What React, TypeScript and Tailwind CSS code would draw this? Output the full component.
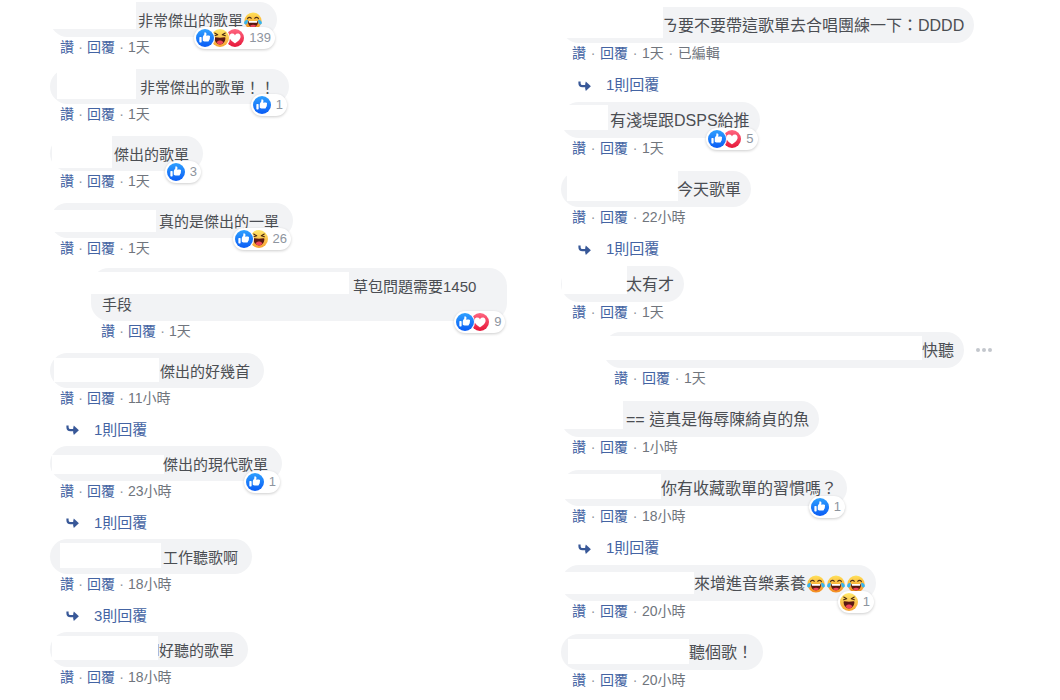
import { useId } from 'react';
import clsx from 'clsx';

type Reaction = 'like' | 'haha' | 'love';

// Cover over the commenter's name, in bubble coordinates
interface Cover {
  x1: number;
  y1: number;
  x2: number;
  y2: number;
}

interface Comment {
  id: string;
  text: string;
  nameWidth: number;
  cover: Cover;
  time: string;
  joy?: number;
  edited?: boolean;
  nested?: boolean;
  multiline?: boolean;
  menu?: boolean;
  nameEdge?: boolean;
  replies?: number;
  reactions?: { types: Reaction[]; count: number };
}

const LEFT: Comment[] = [
  { id: 'l1', text: '非常傑出的歌單', joy: 1, nameWidth: 77, cover: { x1: -2, y1: -2, x2: 86, y2: 27 }, time: '1天', reactions: { types: ['like', 'haha', 'love'], count: 139 } },
  { id: 'l2', text: '非常傑出的歌單！！', nameWidth: 79, cover: { x1: 7, y1: -1, x2: 86, y2: 30 }, time: '1天', reactions: { types: ['like'], count: 1 } },
  { id: 'l3', text: '傑出的歌單', nameWidth: 53, cover: { x1: 2, y1: -1, x2: 62, y2: 32 }, time: '1天', reactions: { types: ['like'], count: 3 } },
  { id: 'l4', text: '真的是傑出的一單', nameWidth: 98, cover: { x1: -1, y1: 7, x2: 106, y2: 29 }, time: '1天', reactions: { types: ['like', 'haha'], count: 26 } },
  { id: 'l5', text: '草包問題需要1450\n手段', nested: true, multiline: true, nameWidth: 251, cover: { x1: -1, y1: 4, x2: 258, y2: 26 }, time: '1天', reactions: { types: ['like', 'love'], count: 9 } },
  { id: 'l6', text: '傑出的好幾首', nameWidth: 99, cover: { x1: 4, y1: 5, x2: 109, y2: 29 }, time: '11小時', replies: 1 },
  { id: 'l7', text: '傑出的現代歌單', nameWidth: 102, cover: { x1: 2, y1: 9, x2: 114, y2: 28 }, time: '23小時', replies: 1, reactions: { types: ['like'], count: 1 } },
  { id: 'l8', text: '工作聽歌啊', nameWidth: 102, cover: { x1: 10, y1: 4, x2: 111, y2: 29 }, time: '18小時', replies: 3 },
  { id: 'l9', text: '好聽的歌單', nameEdge: true, nameWidth: 98, cover: { x1: 2, y1: 4, x2: 108, y2: 28 }, time: '18小時' },
];

const RIGHT: Comment[] = [
  { id: 'r1', text: 'ㄋ要不要帶這歌單去合唱團練一下：DDDD', nameWidth: 90, cover: { x1: -1, y1: -2, x2: 102, y2: 31 }, time: '1天', edited: true, replies: 1 },
  { id: 'r2', text: '有淺堤跟DSPS給推', nameWidth: 38, cover: { x1: -1, y1: 3, x2: 47, y2: 28 }, time: '1天', reactions: { types: ['like', 'love'], count: 5 } },
  { id: 'r3', text: '今天歌單', nameWidth: 105, cover: { x1: 6, y1: -1, x2: 117, y2: 30 }, time: '22小時', replies: 1 },
  { id: 'r4', text: '太有才', nameWidth: 54, cover: { x1: 1, y1: -1, x2: 66, y2: 28 }, time: '1天' },
  { id: 'r5', text: '快聽', nested: true, menu: true, nameWidth: 308, cover: { x1: -1, y1: 4, x2: 319, y2: 28 }, time: '1天' },
  { id: 'r6', text: '== 這真是侮辱陳綺貞的魚', nameWidth: 54, cover: { x1: -1, y1: -1, x2: 62, y2: 28 }, time: '1小時' },
  { id: 'r7', text: '你有收藏歌單的習慣嗎？', nameWidth: 89, cover: { x1: -1, y1: 4, x2: 100, y2: 29 }, time: '18小時', replies: 1, reactions: { types: ['like'], count: 1 } },
  { id: 'r8', text: '來增進音樂素養', joy: 3, nameWidth: 122, cover: { x1: -1, y1: 7, x2: 133, y2: 29 }, time: '20小時', reactions: { types: ['haha'], count: 1 } },
  { id: 'r9', text: '聽個歌！', nameWidth: 117, cover: { x1: 7, y1: 5, x2: 128, y2: 30 }, time: '20小時' },
];

function ReactionIcon({ type }: { type: Reaction }) {
  const id = useId();
  const stops = {
    like: ['#2ea0ff', '#0a5cf5'],
    haha: ['#ffe96b', '#f7a232'],
    love: ['#ff6680', '#e61739'],
  }[type];

  return (
    <svg viewBox="0 0 16 16" className="h-[18px] w-[18px]" aria-label={type}>
      <defs>
        <linearGradient id={id} x1="0" y1="0" x2="0" y2="1">
          <stop offset="0" stopColor={stops[0]} />
          <stop offset="1" stopColor={stops[1]} />
        </linearGradient>
      </defs>
      <circle cx="8" cy="8" r="8" fill={`url(#${id})`} />
      {type === 'like' && (
        <path
          fill="#fff"
          d="M12.162 7.338c.176.123.338.245.338.674 0 .43-.229.604-.474.725.1.163.132.36.089.546-.077.344-.392.611-.672.69.121.194.159.385.015.62-.185.295-.346.407-1.058.407H7.5c-.988 0-1.5-.546-1.5-1V7.665c0-1.23 1.467-2.275 1.467-3.13L7.361 3.47c-.005-.065.008-.224.058-.27.08-.079.301-.2.635-.2.218 0 .363.041.534.123.581.277.732.978.732 1.542 0 .271-.414 1.083-.47 1.364 0 0 .867-.192 1.879-.199 1.061-.006 1.749.19 1.749.842 0 .261-.219.523-.316.666zM3.6 7h.8a.6.6 0 01.6.6v3.8a.6.6 0 01-.6.6h-.8a.6.6 0 01-.6-.6V7.6a.6.6 0 01.6-.6z"
        />
      )}
      {type === 'love' && (
        <path
          fill="#fff"
          d="M10.473 4C8.275 4 8 5.824 8 5.824S7.726 4 5.528 4c-2.114 0-2.73 2.222-2.472 3.41C3.736 10.55 8 12.75 8 12.75s4.265-2.2 4.945-5.34c.257-1.188-.36-3.41-2.472-3.41"
        />
      )}
      {type === 'haha' && (
        <>
          <path d="M3.3 3.6 6 5.1 3.2 6M12.7 3.6 10 5.1l2.8.9" fill="none" stroke="#4a2a12" strokeWidth="0.9" strokeLinecap="round" strokeLinejoin="round" />
          <path d="M3.2 8c0-.5.4-.7.9-.6 2.500.4 5.300.4 7.800 0 .5-.1.9.1.9.6 0 3.200-1.900 5.700-4.800 5.700S3.200 11.200 3.200 8Z" fill="#5a1a14" />
          <path d="M4.900 11.900c.8-1.200 1.900-1.700 3.100-1.700s2.300.5 3.100 1.700c-.8 1.100-1.800 1.800-3.100 1.800s-2.300-.7-3.100-1.800Z" fill="#f0455a" />
        </>
      )}
    </svg>
  );
}

function JoyEmoji() {
  const id = useId();
  return (
    <svg viewBox="0 0 18 18" className="mx-px -my-1 inline-block h-[18px] w-[18px] align-baseline" role="img" aria-label="joy">
      <defs>
        <linearGradient id={id} x1="0" y1="0" x2="0" y2="1">
          <stop offset="0" stopColor="#ffe25a" />
          <stop offset="1" stopColor="#f58a1f" />
        </linearGradient>
      </defs>
      <circle cx="9" cy="9" r="8.600" fill={`url(#${id})`} />
      <path d="M3.600 6.600c.5-1.600 2.700-1.800 3.600-.3M10.800 6.300c.9-1.500 3.100-1.300 3.600.3" fill="none" stroke="#4f321c" strokeWidth="1.200" strokeLinecap="round" />
      <path d="M4 9h10c.4 3.500-1.900 6.300-5 6.300S3.600 12.500 4 9Z" fill="#57180f" />
      <path d="M4.600 9h8.800l-.4 1.700H5Z" fill="#fff" />
      <path d="M6 13.700c1.600-1.400 4.400-1.400 6 0-1.600 2.100-4.400 2.100-6 0Z" fill="#f0455a" />
      <path d="M3.800 7.800C1.700 8 .1 9.200.1 10.800c0 1.200.9 1.900 1.800 1.700 1.600-.3 2.100-2.500 1.900-4.700ZM14.200 7.800c2.100.2 3.700 1.400 3.700 3 0 1.200-.9 1.900-1.800 1.700-1.600-.3-2.100-2.500-1.900-4.700Z" fill="#35b4ee" />
    </svg>
  );
}

function ReactionPill({ types, count }: { types: Reaction[]; count: number }) {
  return (
    <button className="absolute right-[2px] -bottom-3 flex h-[22px] items-center rounded-full bg-white pr-1 pl-[2px] shadow-[0_1px_3px_rgba(0,0,0,0.2)]">
      <span className="flex flex-row-reverse">
        {[...types].reverse().map((type, i) => (
          <span
            key={type}
            className={clsx('relative rounded-full bg-white ring-1 ring-white', i < types.length - 1 && '-ml-[3px]')}
          >
            <ReactionIcon type={type} />
          </span>
        ))}
      </span>
      <span className="ml-[5px] text-[13px] leading-4 text-[#8d949e]">{count}</span>
    </button>
  );
}

function Dot({ large }: { large: boolean }) {
  return <span className={clsx('text-center text-[#90949c]', large ? 'w-[14px]' : 'w-[13px]')}>·</span>;
}

function CommentItem({ comment, large }: { comment: Comment; large: boolean }) {
  const { cover } = comment;
  return (
    <li
      className={clsx(
        comment.nested && (large ? '-mt-[3px] ml-[42px]' : '-mt-[2px] ml-[41px]'),
        !comment.replies && (large ? 'mb-[13px]' : 'mb-3'),
      )}
    >
      <div className="flex items-center">
        <div
          className={clsx(
            'relative rounded-[18px] bg-[#f2f3f5] pl-[11px] leading-[18px] text-[#4b4e53]',
            large ? 'pt-[10px] pr-[10px] pb-2 text-[16px]' : 'pt-[10px] pb-[7px] text-[15px]',
            !large && (comment.multiline ? 'pr-[31px]' : 'pr-[14px]'),
          )}
        >
          <span
            className="absolute bg-white"
            style={{ left: cover.x1, top: cover.y1, width: cover.x2 - cover.x1, height: cover.y2 - cover.y1 }}
          />
          <p className="relative whitespace-pre-line">
            <span
              className={clsx('inline-block h-3', comment.nameEdge && 'border-r border-[#a9b9dc]')}
              style={{ width: comment.nameWidth }}
            />
            {comment.text}
            {Array.from({ length: comment.joy ?? 0 }, (_, i) => (
              <JoyEmoji key={i} />
            ))}
          </p>
          {comment.reactions && <ReactionPill {...comment.reactions} />}
        </div>
        {comment.menu && (
          <button className="ml-3 flex gap-[2px]" aria-label="更多">
            <span className="h-1 w-1 rounded-full bg-[#c3c7cd]" />
            <span className="h-1 w-1 rounded-full bg-[#c3c7cd]" />
            <span className="h-1 w-1 rounded-full bg-[#c3c7cd]" />
          </button>
        )}
      </div>

      <div
        className={clsx(
          'flex h-5 items-center text-[14px] leading-5 text-[#70757d]',
          large ? 'pl-[11px]' : 'pl-[10px]',
        )}
      >
        <a href="#like" className="text-[#4464a3]">讚</a>
        <Dot large={large} />
        <a href="#reply" className="text-[#4464a3]">回覆</a>
        <Dot large={large} />
        <span>{comment.time}</span>
        {comment.edited && (
          <>
            <Dot large={large} />
            <span>已編輯</span>
          </>
        )}
      </div>

      {comment.replies && (
        <a
          href="#replies"
          className={clsx(
            'flex items-center pt-[6px] text-[15px] text-[#4464a3]',
            large ? 'h-[39px] pl-[17px]' : 'h-[38px] pl-4',
          )}
        >
          <svg viewBox="0 0 13 10" className="mr-[15px] h-[10px] w-[13px]">
            <path d="M1.500.6v1.600c0 2 1 3 3 3H9" fill="none" stroke="#385898" strokeWidth="2.200" />
            <path d="M7.800.4 12.900 5.200 7.800 10l-.6-2.500V3Z" fill="#385898" />
          </svg>
          {comment.replies}則回覆
        </a>
      )}
    </li>
  );
}

export default function App() {
  return (
    <main className="grid min-h-screen grid-cols-2 bg-white font-['Liberation_Sans','Noto_Sans_CJK_TC',sans-serif]">
      <ul className="flex flex-col items-start pt-[2px] pl-[50px]">
        {LEFT.map((comment) => (
          <CommentItem key={comment.id} comment={comment} large={false} />
        ))}
      </ul>
      <ul className="flex flex-col items-start pt-[7px] pl-[31px]">
        {RIGHT.map((comment) => (
          <CommentItem key={comment.id} comment={comment} large />
        ))}
      </ul>
    </main>
  );
}
